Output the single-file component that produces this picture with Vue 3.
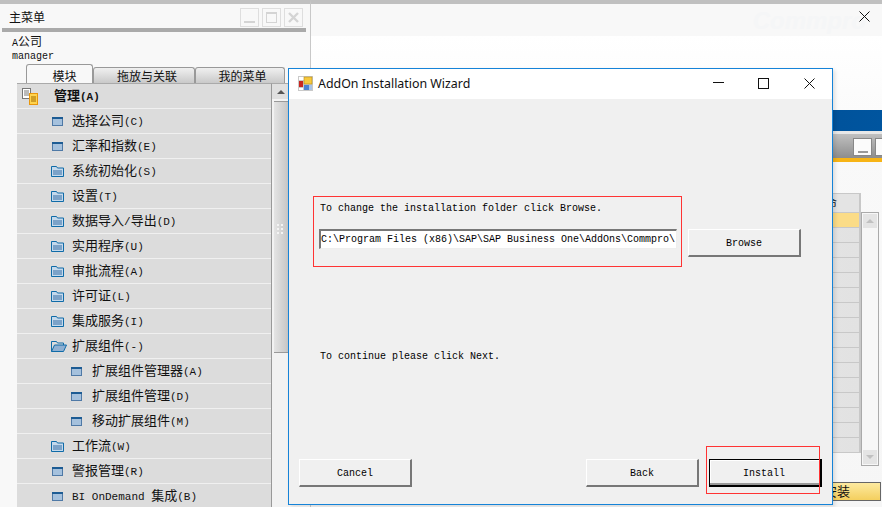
<script setup>
const rows = [
  { label: '选择公司(C)', icon: 'win' },
  { label: '汇率和指数(E)', icon: 'win' },
  { label: '系统初始化(S)', icon: 'folder' },
  { label: '设置(T)', icon: 'folder' },
  { label: '数据导入/导出(D)', icon: 'folder' },
  { label: '实用程序(U)', icon: 'folder' },
  { label: '审批流程(A)', icon: 'folder' },
  { label: '许可证(L)', icon: 'folder' },
  { label: '集成服务(I)', icon: 'folder' },
  { label: '扩展组件(-)', icon: 'open' },
  { label: '扩展组件管理器(A)', icon: 'win', child: true },
  { label: '扩展组件管理(D)', icon: 'win', child: true },
  { label: '移动扩展组件(M)', icon: 'win', child: true },
  { label: '工作流(W)', icon: 'folder' },
  { label: '警报管理(R)', icon: 'win' },
  { label: 'BI OnDemand 集成(B)', icon: 'win' }
]
const parts = (s) => s.split(/([\x00-\x7f]+)/).filter(Boolean).map((t) => ({ t, latin: /^[\x00-\x7f]/.test(t) }))
const tableRows = Array.from({ length: 15 }, (_, i) => i)
</script>

<template>
  <div class="page">
    <aside class="menu">
      <div class="menu-head">
        <span class="menu-title">主菜单</span>
        <div class="mini-btns">
          <span class="mini"><svg width="17" height="17" viewBox="0 0 17 17"><rect x="3" y="12" width="11" height="2" fill="#d4d4d4" /></svg></span>
          <span class="mini"><svg width="17" height="17" viewBox="0 0 17 17"><rect x="3.5" y="3.5" width="10" height="10" fill="none" stroke="#d4d4d4" /><rect x="3" y="3" width="11" height="2" fill="#d4d4d4" /></svg></span>
          <span class="mini"><svg width="17" height="17" viewBox="0 0 17 17"><path d="M4 4l9 9M13 4l-9 9" stroke="#d4d4d4" stroke-width="2.4" /></svg></span>
        </div>
      </div>
      <div class="menu-rule"></div>
      <div class="company"><span class="mono">A</span>公司</div>
      <div class="user mono">manager</div>
      <div class="tabs">
        <span class="tab active">模块</span>
        <span class="tab t2">拖放与关联</span>
        <span class="tab t3">我的菜单</span>
      </div>
      <div class="tree-wrap">
        <div class="tree">
          <div class="tree-head">
            <svg class="head-icon" width="17" height="17" viewBox="0 0 17 17">
              <rect x="0.5" y="0.5" width="8" height="10" fill="#fff" stroke="#777" />
              <path d="M2 3h5M2 5h5M2 7h5" stroke="#777" />
              <rect x="7.5" y="5.5" width="8" height="11" fill="#ffd34d" stroke="#e8960c" />
              <path d="M9 9h5M9 11h5M9 13h5" stroke="#a06a00" />
            </svg>
            <b class="head-label">管理<span class="mono-b">(A)</span></b>
          </div>
          <div v-for="r in rows" :key="r.label" class="row" :class="{ child: r.child }">
            <svg v-if="r.icon === 'win'" class="icon" width="13" height="13" viewBox="0 0 13 13">
              <rect x="1.5" y="2.5" width="10" height="8" fill="#a5c1dd" stroke="#4f79a6" />
              <rect x="1" y="2" width="11" height="2" fill="#1d5c94" />
            </svg>
            <svg v-else-if="r.icon === 'folder'" class="icon" width="13" height="13" viewBox="0 0 13 13">
              <path d="M0.5 1.5h5l1 1.500h6v8.500h-12z" fill="#c4d9ec" stroke="#0f6ba8" />
              <rect x="2" y="5" width="9" height="5" fill="#7ba2c8" />
            </svg>
            <svg v-else class="icon" width="17" height="13" viewBox="0 0 17 13" style="margin-right:-4px">
              <path d="M0.500 11.500v-10h5l1 1.500h6v2" fill="none" stroke="#0f6ba8" />
              <path d="M0.500 11.500l3-6.500h12l-3 6.500z" fill="#8fb0d2" stroke="#0f6ba8" />
            </svg>
            <span class="row-label">
              <span v-for="(p, i) in parts(r.label)" :key="i" :class="{ mono: p.latin }">{{ p.t }}</span>
            </span>
          </div>
        </div>
        <div class="scroll">
          <span class="scroll-up"><i class="tri"></i></span>
          <span class="thumb">
            <svg class="grip" width="6" height="10" viewBox="0 0 6 10">
              <path d="M0 0h2v2H0zM4 0h2v2H4zM0 4h2v2H0zM4 4h2v2H4zM0 8h2v2H0zM4 8h2v2H4z" fill="#f4f4f4" />
            </svg>
          </span>
        </div>
      </div>
    </aside>

    <main class="back">
      <div class="back-top">
        <span class="faint">Commpro</span>
        <svg class="back-close" width="11" height="11" viewBox="0 0 11 11"><path d="M0.500 0.500l10 10M10.500 0.500l-10 10" stroke="#111" /></svg>
      </div>
      <div class="back-white"></div>
      <div class="blue-bar"></div>
      <div class="sub-title">
        <span class="sub-btn"><i></i></span>
        <span class="sub-btn"></span>
      </div>
      <div class="gold-line"></div>
      <div class="grid-area">
        <div class="grid">
          <div class="grid-head">命</div>
          <div class="grid-row sel"></div>
          <div v-for="n in tableRows" :key="n" class="grid-row"></div>
        </div>
        <div class="grid-scroll">
          <span class="gs-btn"><i class="tri tri-light"></i></span>
          <span class="gs-btn"><i class="tri tri-light down"></i></span>
        </div>
      </div>
      <div class="install-row"><span class="gold-btn">安装</span></div>
    </main>

    <section class="dialog">
      <header class="dlg-title">
        <svg width="15" height="15" viewBox="0 0 15 15">
          <rect x="0" y="0" width="15" height="15" fill="#c9c9c9" />
          <rect x="1" y="1" width="5" height="3" fill="#fff" />
          <rect x="6" y="1" width="8" height="7" fill="#f7c93e" stroke="#b58a14" stroke-width="0.6" />
          <rect x="1" y="5" width="4" height="6" fill="#c9261f" />
          <rect x="6" y="9" width="5" height="5" fill="#4b82d1" />
          <rect x="11" y="9" width="3" height="5" fill="#a9c4e8" />
          <rect x="1" y="12" width="4" height="2" fill="#fff" />
        </svg>
        <span class="dlg-name">AddOn Installation Wizard</span>
        <svg class="w-min" width="11" height="11" viewBox="0 0 11 11"><path d="M0 4.500h11" stroke="#111" /></svg>
        <svg class="w-max" width="11" height="11" viewBox="0 0 11 11"><rect x="0.500" y="0.500" width="10" height="10" fill="none" stroke="#111" /></svg>
        <svg class="w-close" width="11" height="11" viewBox="0 0 11 11"><path d="M0.500 0.500l10 10M10.500 0.500l-10 10" stroke="#111" /></svg>
      </header>
      <div class="dlg-body">
        <div class="path-row">
          <div class="path-group">
            <div class="txt path-label">To change the installation folder click Browse.</div>
            <div class="path-input txt">C:\Program Files (x86)\SAP\SAP Business One\AddOns\Commpro\</div>
          </div>
          <button class="btn browse txt">Browse</button>
        </div>
        <div class="txt continue">To continue please click Next.</div>
        <div class="footer">
          <button class="btn txt">Cancel</button>
          <span class="spacer"></span>
          <button class="btn txt">Back</button>
          <div class="install-wrap">
            <button class="btn primary txt">Install</button>
            <i class="red-mark"></i>
          </div>
        </div>
      </div>
    </section>
  </div>
</template>

<style scoped>
.page {
  position: relative;
  display: flex;
  width: 882px;
  height: 507px;
  overflow: hidden;
  background: #f7f7f7;
  font-family: "Noto Sans CJK SC", sans-serif;
  color: #111;
}
.mono { font-family: "Liberation Mono", "Noto Sans CJK SC", monospace; font-size: 11px; }
.mono-b { font-family: "Liberation Mono", monospace; font-size: 11px; font-weight: 700; }

.menu {
  width: 311px;
  flex: none;
  box-sizing: border-box;
  height: 507px;
  border-top: 4px solid #c0c0c0;
  border-right: 1px solid #c8c8c8;
  background: #f8f8f8;
  overflow: hidden;
}
.menu-head { display: flex; align-items: center; height: 24px; padding: 0 7px 0 9px; }
.menu-title { flex: 1; font-size: 12px; line-height: 24px; margin-top: 2px; }
.mini-btns { display: flex; gap: 3px; margin-top: 3px; }
.mini { width: 17px; height: 17px; border: 1px solid #dedede; display: block; }
.mini svg { display: block; }
.menu-rule { height: 4px; margin: 0 4px 0 2px; background: #aaa; }
.company { margin: 1px 0 0 12px; font-size: 12px; line-height: 16px; height: 16px; }
.company .mono { font-size: 10px; }
.user { margin: 1px 0 0 12px; font-size: 10px; line-height: 14px; height: 14px; }
.tabs { display: flex; align-items: flex-end; height: 19px; margin: 0 0 0 26px; }
.tab {
  box-sizing: border-box;
  width: 67px;
  height: 16px;
  border: 1px solid #999;
  border-bottom: 0;
  border-radius: 3px 3px 0 0;
  background: linear-gradient(#f0f0f0, #c9c9c9);
  font-size: 12px;
  line-height: 15px;
  text-align: center;
}
.tab.active { height: 19px; background: #f8f8f8; line-height: 21px; padding-left: 10px; }
.tab.t2 { width: 102px; padding-left: 6px; }
.tab.t3 { width: 90px; padding-left: 5px; }

.tree-wrap { display: flex; margin-left: 17px; width: 271px; }
.tree { width: 254px; flex: none; border-top: 1px solid #aaa; }
.tree-head {
  display: flex;
  align-items: center;
  height: 24px;
  padding-left: 5px;
  background: #dcdcdc;
  border-bottom: 1px solid #f0f0f0;
}
.head-icon { flex: none; }
.head-label { margin-left: 15px; font-size: 13px; font-weight: 700; padding-bottom: 4px; }
.row {
  box-sizing: border-box;
  display: flex;
  align-items: center;
  height: 25px;
  padding-left: 34px;
  background: #dcdcdc;
  border-bottom: 1px solid #f0f0f0;
  font-size: 13px;
}
.row.child { padding-left: 53px; }
.icon { flex: none; }
.row-label { margin-left: 8px; white-space: pre; padding-bottom: 3px; }
.row.child .row-label { margin-left: 9px; }

.scroll {
  width: 17px;
  flex: none;
  display: flex;
  flex-direction: column;
  background: #f2f2f2;
  border-left: 1px solid #999;
  border-top: 1px solid #aaa;
}
.scroll-up { height: 15px; background: #e0e0e0; display: flex; align-items: center; justify-content: center; border-bottom: 2px solid #f4f4f4; }
.tri { width: 0; height: 0; border: 4px solid transparent; border-top: 0; border-bottom: 4px solid #555; display: block; }
.thumb { position: relative; height: 250px; margin-left: 2px; background: linear-gradient(90deg, #e4e4e4, #c4c4c4); border-top: 1px solid #999; border-bottom: 1px solid #999; }
.grip { position: absolute; left: 3px; top: 122px; display: block; }

.back { flex: 1; min-width: 0; display: flex; flex-direction: column; height: 507px; border-top: 4px solid #c0c0c0; box-sizing: border-box; background: linear-gradient(#fafafa, #f6f6f6); }
.back-top { position: relative; height: 32px; background: #f8f8f8; display: flex; justify-content: flex-end; }
.faint { font-size: 24px; font-weight: 700; font-style: italic; color: #f5f6f7; font-family: "Liberation Sans", sans-serif; margin: 3px 16px 0 0; line-height: 28px; }
.back-close { position: absolute; right: 12px; top: 7px; }
.back-white { height: 74px; background: linear-gradient(#ffffff, #fbfbfb); }
.blue-bar { height: 21px; background: linear-gradient(90deg, #003a75, #00559f); }
.sub-title {
  display: flex;
  justify-content: flex-end;
  gap: 3px;
  height: 27px;
  box-sizing: border-box;
  padding: 4px 0 0 0;
  border-top: 3px solid #e8e8e8;
  background: linear-gradient(#c0c0c0, #8d8d8d);
  overflow: hidden;
}
.sub-btn { width: 19px; height: 18px; flex: none; box-sizing: border-box; border: 1px solid #888; background: #fbfbfb; display: block; position: relative; }
.sub-btn i { position: absolute; left: 4px; bottom: 2px; width: 10px; height: 2px; background: #999; }
.sub-title .sub-btn:last-child { margin-right: -12px; }
.gold-line { height: 4px; background: #f7b416; }
.grid-area { display: flex; align-items: flex-start; height: 308px; padding: 31px 0 0 0; box-sizing: border-box; justify-content: flex-end; }
.grid { width: 320px; border-left: 1px solid #c8c8c8; border-right: 2px solid #c8c8c8; border-top: 1px solid #c8c8c8; box-sizing: border-box; }
.grid-head { height: 18px; background: #e4e4e4; font-size: 12px; line-height: 18px; padding-left: 283px; border-bottom: 1px solid #c8c8c8; overflow: hidden; white-space: nowrap; }
.grid-row { height: 14px; background: linear-gradient(90deg, #ececec, #e2e2e2); border-bottom: 1px solid #c8c8c8; }
.grid-row.sel { background: #fbdc87; }
.grid-scroll { box-sizing: border-box; width: 18px; height: 254px; margin: 19px 3px 0 0; display: flex; flex-direction: column; justify-content: space-between; background: #f7f7f7; border: 1px solid #aaa; padding: 1px; }
.gs-btn { height: 14px; background: #e4e4e4; display: flex; align-items: center; justify-content: center; }
.tri-light { border-bottom-color: #c0c0c0; }
.tri-light.down { transform: rotate(180deg); }
.install-row { display: flex; justify-content: flex-end; padding: 12px 1px 0 0; }
.gold-btn { box-sizing: border-box; width: 88px; height: 19px; border: 1px solid #666; background: linear-gradient(#fdeaa0, #f4cf5e); font-size: 13px; line-height: 16px; text-align: center; }

.dialog {
  position: absolute;
  left: 288px;
  top: 68px;
  width: 545px;
  height: 437px;
  box-sizing: border-box;
  display: flex;
  flex-direction: column;
  border: 1px solid #1583d8;
  background: #f0f0f0;
  box-shadow: 2px 2px 4px rgba(0, 0, 0, 0.12);
}
.dlg-title { position: relative; display: flex; align-items: center; height: 30px; padding: 0 0 1px 9px; box-sizing: border-box; background: #fff; flex: none; }
.dlg-name { margin-left: 5px; font-family: "Noto Sans", sans-serif; font-size: 12.4px; color: #111; padding-bottom: 1px; }
.w-min { position: absolute; left: 424px; top: 9px; }
.w-max { position: absolute; left: 469px; top: 9px; }
.w-close { position: absolute; left: 515px; top: 9px; }
.dlg-body { flex: 1; min-height: 0; display: flex; flex-direction: column; }
.txt { font-family: "Liberation Mono", monospace; font-size: 10px; color: #000; }
.path-row { display: flex; align-items: flex-start; margin: 97px 0 0 24px; }
.path-group { box-sizing: border-box; width: 369px; height: 71px; border: 1px solid #f33; padding: 6px 0 0 5px; }
.path-label { line-height: 12px; padding-left: 1px; }
.path-input {
  box-sizing: border-box;
  width: 358px;
  height: 20px;
  margin-top: 14px;
  background: #fff;
  border: 1px solid #eee;
  border-top: 2px solid #777;
  border-left: 2px solid #777;
  line-height: 17px;
  white-space: nowrap;
  overflow: hidden;
}
.btn {
  box-sizing: border-box;
  width: 113px;
  height: 28px;
  padding: 3px 0 0;
  background: #f0f0f0;
  border: 1px solid #fff;
  border-right: 2px solid #777;
  border-bottom: 2px solid #777;
  line-height: 20px;
  text-align: center;
}
.browse { margin: 33px 0 0 6px; }
.continue { margin: 84px 0 0 31px; line-height: 12px; }
.footer { display: flex; align-items: flex-end; margin-top: auto; padding: 0 10px 17px 10px; }
.spacer { flex: 1; }
.install-wrap { position: relative; margin-left: 10px; }
.primary { display: block; padding-right: 2px; border: 1px solid #000; border-right-width: 2px; border-bottom-width: 2px; box-shadow: inset 0 -2px 0 #999, inset 1px 1px 0 #fff; }
.red-mark { position: absolute; left: -3px; top: -13px; width: 112px; height: 46px; border: 1px solid #f33; }
</style>
